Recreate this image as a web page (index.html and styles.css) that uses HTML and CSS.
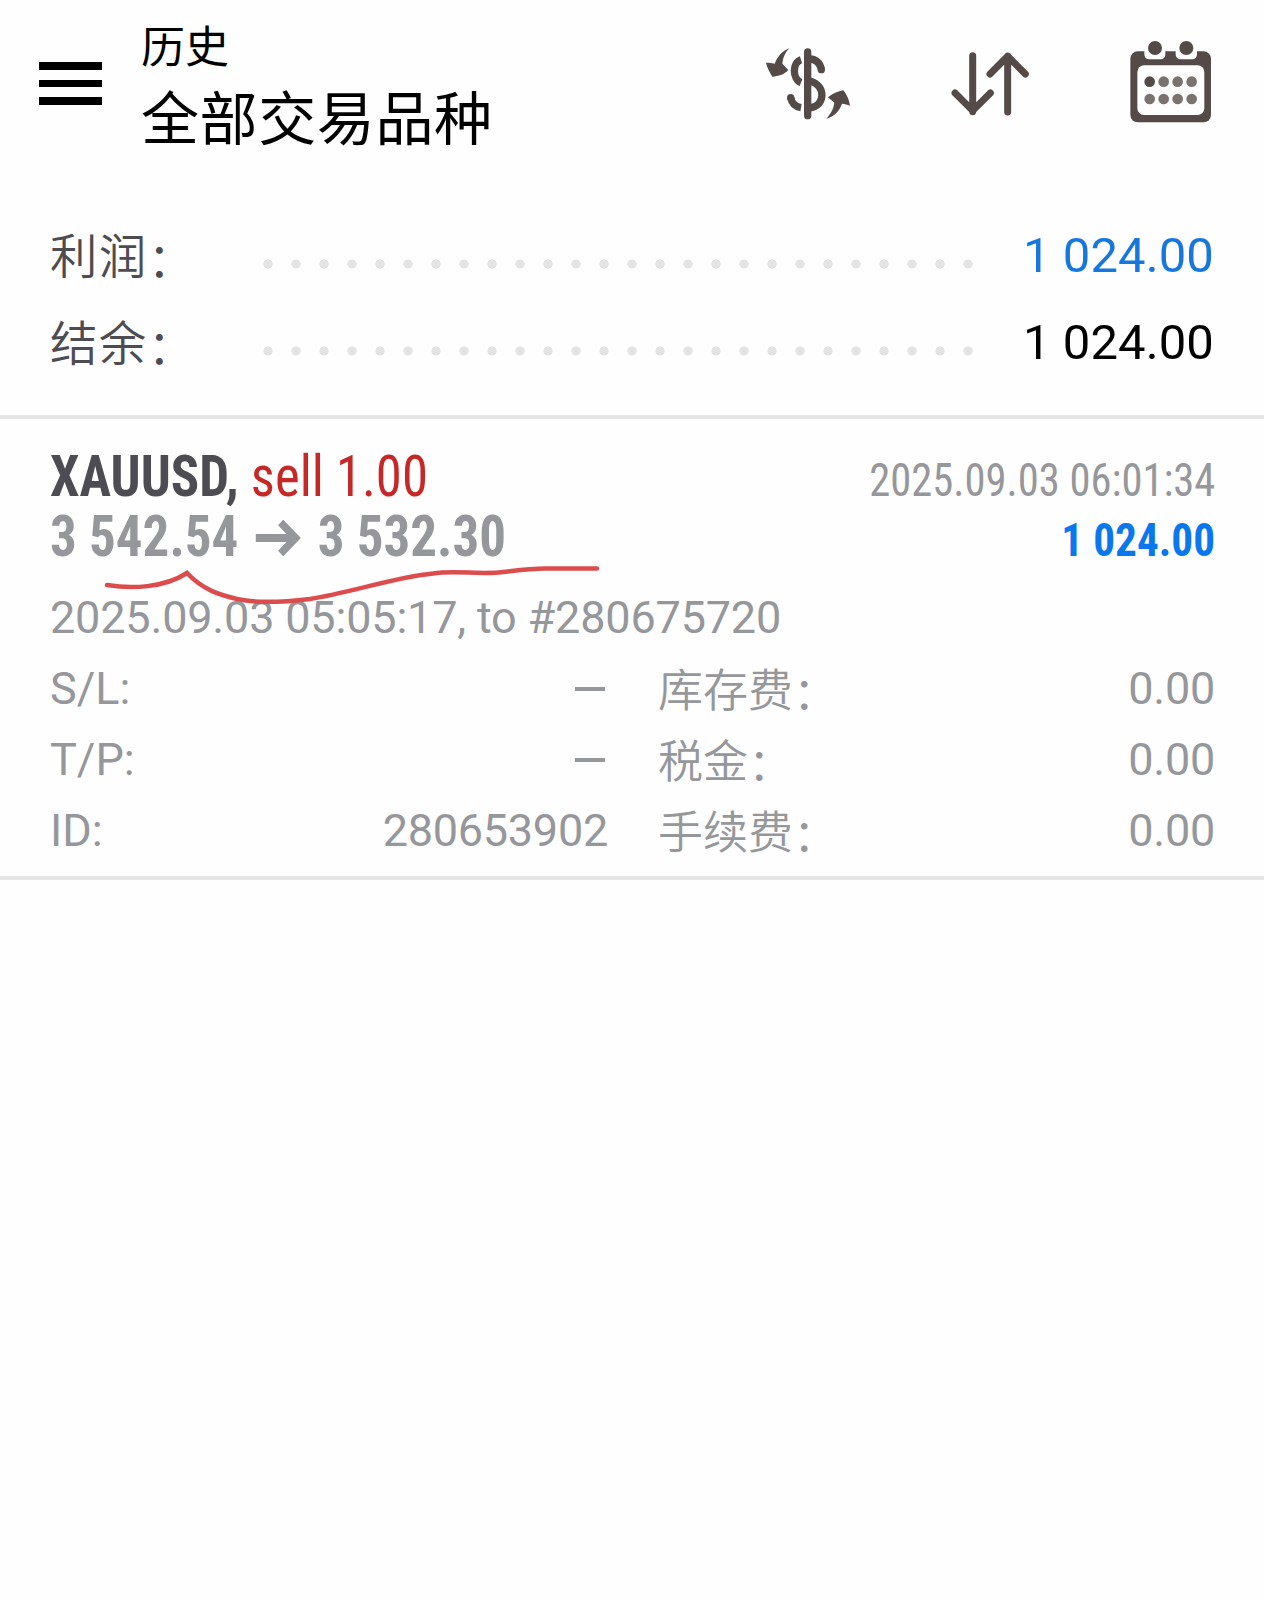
FILE: index.html
```html
<!doctype html>
<html lang="zh-CN">
  <head>
    <meta charset="utf-8">
    <meta name="viewport" content="width=device-width, initial-scale=1">
    <title>历史</title>
    <link rel="stylesheet" href="styles.css">
  </head>
  <body>
    <header class="topbar">
      <div class="menu">
        <span></span>
        <span></span>
        <span></span>
      </div>
      <div class="titles">
        <div class="title">历史</div>
        <div class="subtitle">全部交易品种</div>
      </div>
      <nav class="actions">
        <svg class="icon-symbols" viewBox="78 80 258 220">
          <path d="M152 84 C140 94 132 110 130 130 L148 149 C134 164 118 167 100 169 C92 156 85 144 81 127 C91 127 97 128 107 130 C116 107 131 90 152 84Z" fill="#544b48"/>
          <path d="M262 295 C275 280 283 268 286 247 L267 231 C281 220 296 213 313 210 C323 222 331 238 333 256 C325 252 318 251 309 250 C301 273 286 288 262 295Z" fill="#544b48"/>
          <g fill="none" stroke="#544b48" stroke-width="22">
            <path d="M206 95V286" stroke-linecap="round"/>
            <path d="M212 116C230 117 243 128 247 147" />
            <path d="M212 182C262 193 260 258 212 263"/>
            <path d="M186 118C160 126 159 176 186 187"/>
            <path d="M155 232C158 248 168 259 186 262"/>
          </g>
          <circle cx="247" cy="148" r="11" fill="#544b48"/>
          <circle cx="155" cy="232" r="11" fill="#544b48"/>
        </svg>
        <svg class="icon-sort" viewBox="66 62 236 196">
          <g fill="none" stroke="#544b48" stroke-width="21" stroke-linecap="round" stroke-linejoin="round">
            <path d="M131 76V244M78 188L131 241L184 188"/>
            <path d="M236 245V78M183 131L236 78L289 131"/>
          </g>
        </svg>
        <svg class="icon-calendar" viewBox="62 60 246 250">
          <rect x="63" y="94" width="242" height="213" rx="22" fill="#544b48"/>
          <path d="M105 90V103Q105 118 121 118H153Q168 118 168 103V90ZM199 90V103Q199 118 215 118H247Q263 118 263 103V90Z" fill="#fefefe"/>
          <circle cx="137" cy="84" r="21" fill="#544b48"/>
          <circle cx="231" cy="84" r="21" fill="#544b48"/>
          <rect x="84" y="136" width="201" height="149" rx="20" fill="#fefefe"/>
          <g fill="#7a726f">
            <circle cx="121" cy="185" r="16" fill="#544b48"/>
            <circle cx="163" cy="185" r="16"/>
            <circle cx="205" cy="185" r="16"/>
            <circle cx="247" cy="185" r="16"/>
            <circle cx="121" cy="237" r="16"/>
            <circle cx="163" cy="237" r="16"/>
            <circle cx="205" cy="237" r="16"/>
            <circle cx="247" cy="237" r="16"/>
          </g>
        </svg>
      </nav>
    </header>

    <section class="summary">
      <div class="summary-row">
        <span class="label">利润<span class="colon">：</span></span>
        <span class="dots"></span>
        <span class="value blue">1 024.00</span>
      </div>
      <div class="summary-row">
        <span class="label">结余<span class="colon">：</span></span>
        <span class="dots"></span>
        <span class="value">1 024.00</span>
      </div>
    </section>

    <section class="deal">
      <div class="deal-row">
        <div class="symbol"><b>XAUUSD,</b> <span class="sell">sell 1.00</span></div>
        <div class="time">2025.09.03 06:01:34</div>
      </div>
      <div class="deal-row">
        <div class="prices">
          <span>3 542.54</span>
          <svg class="arrow" viewBox="0 0 49 36">
            <path d="M0 18H42M27 2.500L43 18L27 33.500" fill="none" stroke="#96979b" stroke-width="8"/>
          </svg>
          <span>3 532.30</span>
        </div>
        <div class="profit">1 024.00</div>
      </div>
      <svg class="scribble" viewBox="100 560 505 50">
        <path d="M107 585C131 589 164 588 187 573C203 590 220 595 237 599C259 604 285 602 310 599C350 593 395 577 433 573.500C455 570 480 575 503 572C520 570 530 568.500 545 568.500H597" fill="none" stroke="#dc4c4c" stroke-width="4.500" stroke-linecap="round"/>
      </svg>
      <div class="opened">2025.09.03 05:05:17, to #280675720</div>
      <div class="details">
        <div class="detail"><span>S/L:</span><i class="none"></i></div>
        <div class="detail"><span class="cjk">库存费<span class="colon">：</span></span><span class="num">0.00</span></div>
        <div class="detail"><span>T/P:</span><i class="none"></i></div>
        <div class="detail"><span class="cjk">税金<span class="colon">：</span></span><span class="num">0.00</span></div>
        <div class="detail"><span>ID:</span><span class="num">280653902</span></div>
        <div class="detail"><span class="cjk">手续费<span class="colon">：</span></span><span class="num">0.00</span></div>
      </div>
    </section>
  </body>
</html>
```
FILE: styles.css
```css
body {
  margin: 0;
  background: #fefefe;
  color: #000;
  font-family: Roboto, "Noto Sans CJK SC", sans-serif;
}

.topbar {
  display: flex;
  box-sizing: border-box;
  height: 212px;
  padding-left: 38.5px;
}

.menu {
  display: flex;
  flex-direction: column;
  gap: 10px;
  width: 63px;
  margin-top: 62px;
}

.menu span {
  height: 7.5px;
  background: #000;
}

.titles {
  margin: 11px 0 0 39.5px;
  font-family: "Noto Sans CJK SC", sans-serif;
  font-weight: 400;
}

.title {
  font-size: 44px;
  line-height: 66px;
}

.subtitle {
  font-size: 58px;
  line-height: 76px;
  letter-spacing: 0.6px;
}

.actions {
  display: flex;
  flex: 1;
  justify-content: flex-end;
  padding-right: 52px;
}

.icon-symbols {
  width: 86px;
  height: 73.3px;
  margin-top: 46.7px;
}

.icon-sort {
  width: 78.7px;
  height: 65.3px;
  margin: 50.7px 0 0 100px;
}

.icon-calendar {
  width: 82px;
  height: 83.3px;
  margin: 40px 0 0 100px;
}

.summary {
  padding-bottom: 29px;
  border-bottom: 4px solid #e5e5e5;
}

.summary-row {
  display: flex;
  align-items: center;
  height: 87px;
  padding: 0 50px;
  font-size: 49px;
  line-height: 87px;
}

.label {
  width: 204px;
  padding-top: 6px;
  color: #4d4c52;
  font-size: 47.5px;
  font-weight: 350;
  letter-spacing: 1.3px;
}

.colon {
  position: relative;
  top: 3px;
}

.dots {
  width: 728px;
  height: 10px;
  margin-top: 17px;
  background: radial-gradient(circle, #e4e4e4 4.3px, transparent 4.9px) 0 0 / 28px 10px;
}

.value {
  flex: 1;
  letter-spacing: 0.1px;
  text-align: right;
}

.blue {
  color: #1677de;
}

.deal {
  padding: 28px 49px 10px 50px;
  border-bottom: 4px solid #e5e5e5;
  color: #96979b;
}

.deal-row {
  display: flex;
  justify-content: space-between;
  align-items: baseline;
  height: 60px;
  font-family: "Roboto Condensed", Roboto, sans-serif;
  font-stretch: 75%;
  line-height: 60px;
}

.symbol {
  font-size: 57px;
  transform: scaleX(0.925);
  transform-origin: left;
}

.symbol b {
  color: #4d4c52;
}

.sell {
  color: #c62828;
}

.time {
  font-size: 47px;
  transform: scaleX(0.905);
  transform-origin: right;
}

.prices {
  font-size: 57px;
  font-weight: bold;
  transform: scaleX(0.93);
  transform-origin: left;
}

.arrow {
  width: 49px;
  height: 36px;
  margin: 0 5px;
}

.profit {
  color: #0a78ec;
  font-size: 47px;
  font-weight: bold;
  transform: scaleX(0.92);
  transform-origin: right;
}

/* hand-drawn underline over the prices */
.scribble {
  position: absolute;
  top: 560px;
  left: 100px;
  width: 505px;
  height: 50px;
}

.opened {
  margin-top: 15px;
  font-size: 45px;
  font-weight: 370;
  line-height: 71px;
  letter-spacing: -0.18px;
}

.details {
  display: grid;
  grid-template-columns: 558px 557px;
  column-gap: 50px;
}

.detail {
  display: flex;
  justify-content: space-between;
  align-items: center;
  height: 71px;
  font-size: 45px;
  font-weight: 370;
  line-height: 71px;
}

.cjk {
  padding-top: 6px;
  font-weight: 350;
}

.num {
  letter-spacing: -0.25px;
}

.none {
  width: 30px;
  height: 4px;
  margin-right: 3px;
  background: #96979b;
}
```
